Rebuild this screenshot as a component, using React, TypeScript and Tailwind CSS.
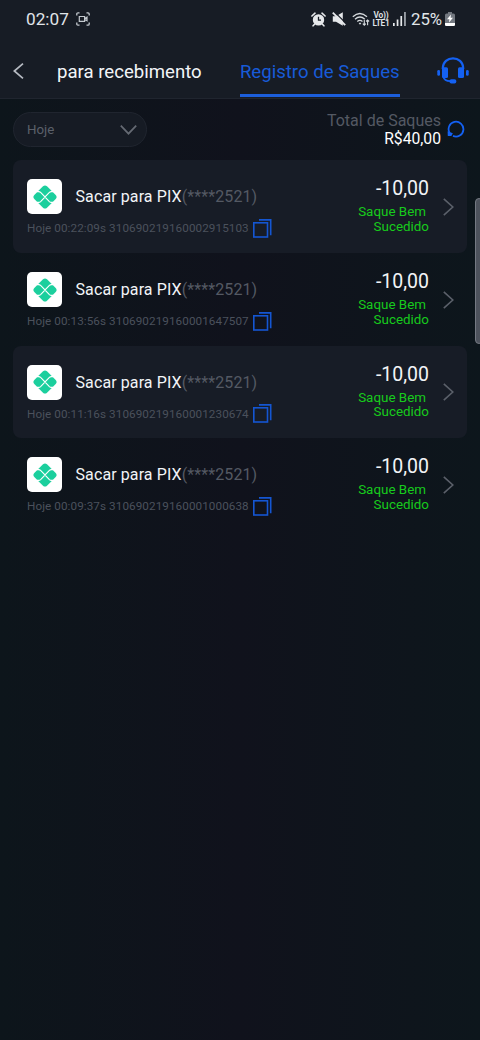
import clsx from "clsx";

type Withdrawal = {
  time: string;
  orderNo: string;
  account: string;
  amount: string;
};

const withdrawals: Withdrawal[] = [
  { time: "00:22:09s", orderNo: "310690219160002915103", account: "(****2521)", amount: "-10,00" },
  { time: "00:13:56s", orderNo: "310690219160001647507", account: "(****2521)", amount: "-10,00" },
  { time: "00:11:16s", orderNo: "310690219160001230674", account: "(****2521)", amount: "-10,00" },
  { time: "00:09:37s", orderNo: "310690219160001000638", account: "(****2521)", amount: "-10,00" },
];

function RecorderIcon() {
  return (
    <svg className="h-[14px] w-[14px]" viewBox="0 0 14 14" fill="none" stroke="#c3c8ce" strokeWidth="1.3">
      <path d="M.8 3.5V2Q.8.8 2 .8h1.5M10.5.8H12q1.2 0 1.2 1.2v1.5M13.2 10.5V12q0 1.2-1.2 1.2h-1.5M3.5 13.2H2Q.8 13.2.8 12v-1.5" />
      <path d="M3.3 4.5h5.300v4.800H3.300zM8.800 6.400l2.200-1.300v3.600l-2.200-1.300" strokeWidth="1.200" />
    </svg>
  );
}

function AlarmIcon() {
  return (
    <svg className="h-[15px] w-[15px]" viewBox="0 0 15 15">
      <path d="M.9 4 4 1.2M14.1 4 11 1.2M3.5 12.3l-1.4 1.5M11.5 12.3l1.4 1.5" stroke="#e6e8eb" strokeWidth="1.6" strokeLinecap="round" />
      <circle cx="7.5" cy="7.9" r="5.7" fill="#e6e8eb" />
      <path d="M7.5 4.7v3.5H10" fill="none" stroke="#171c25" strokeWidth="1.3" />
    </svg>
  );
}

function MuteIcon() {
  return (
    <svg className="h-[14px] w-[14px]" viewBox="0 0 14 14">
      <path d="M.8 4.200h3.200L10.800.2v13.600L4 9.800H.8z" fill="#e6e8eb" />
      <path d="M2-.6 14.400 11.800" stroke="#171c25" strokeWidth="1.2" />
      <path d="M.8.700 13.200 13.100" stroke="#e6e8eb" strokeWidth="1.900" />
    </svg>
  );
}

function WifiIcon() {
  return (
    <svg className="h-[14px] w-[18px]" viewBox="0 0 18 14" fill="none" stroke="#d5d9dd" strokeWidth="1.3">
      <path d="M.8 4.8q7-6.6 14.2 0" />
      <path d="M3 7.2q4.9-4.5 9.8 0" />
      <path d="M5.3 9.5q2.6-2.3 5.2 0" />
      <path d="M6.7 11.2 8 12.7l1.3-1.5-1.3-.8z" fill="#d5d9dd" stroke="none" />
      <path d="M12.3 8v5.2M10.8 11.7l1.5 1.5 1.5-1.5M15.6 13.2V8M14.1 9.5 15.6 8l1.5 1.5" strokeWidth="1.1" />
    </svg>
  );
}

function SignalIcon() {
  return (
    <svg className="h-[14px] w-[13px]" viewBox="0 0 13 14" fill="#e6e8eb">
      <rect x="0" y="11" width="1.7" height="3" />
      <rect x="3.7" y="7.5" width="1.7" height="6.5" />
      <rect x="7.4" y="4" width="1.7" height="10" />
      <rect x="11.1" y="0" width="1.7" height="14" fill="#a6abb2" />
    </svg>
  );
}

function BatteryIcon() {
  return (
    <svg className="h-[14px] w-[10px]" viewBox="0 0 10 14">
      <path d="M3 0h4v1.5h1.5Q10 1.5 10 3v9.5Q10 14 8.5 14h-7Q0 14 0 12.5V3q0-1.5 1.5-1.5H3z" fill="#737880" />
      <path d="M0 11h10v1.5Q10 14 8.5 14h-7Q0 14 0 12.5z" fill="#fff" />
      <path d="M6 2.500 2 7.300h2.400L4 10.500 8 5.800H5.600z" fill="#fff" />
    </svg>
  );
}

function HeadsetIcon() {
  return (
    <svg className="h-[27px] w-[32px]" viewBox="0 0 32 27" fill="#1461f3">
      <path d="M5.8 12C5.800-2.300 26.200-2.300 26.200 12" fill="none" stroke="#1461f3" strokeWidth="2.300" />
      <rect x="5" y="10.300" width="6" height="10.700" rx="1.500" />
      <rect x="21" y="10.300" width="6" height="10.700" rx="1.500" />
      <rect x=".3" y="13" width="2.700" height="5.800" rx="1.300" />
      <rect x="29" y="13" width="2.700" height="5.800" rx="1.300" />
      <path d="M6.200 19.500q1.200 4.700 7 4.700" fill="none" stroke="#1461f3" strokeWidth="1.700" />
      <rect x="12.500" y="22.300" width="6.800" height="4.200" rx="1.800" />
    </svg>
  );
}

function RefreshIcon() {
  return (
    <svg className="h-[18px] w-[18px]" viewBox="0 0 18 18">
      <path d="M2.700 13A7.400 7.400 0 1 1 6 15.900" fill="none" stroke="#1461f3" strokeWidth="1.800" />
      <path d="M.6 11.300 5.800 13.300 4.400 16H.8z" fill="#1461f3" />
    </svg>
  );
}

function PixIcon() {
  return (
    <div className="flex size-[35px] items-center justify-center rounded-[5px] bg-white">
      <svg className="size-6" viewBox="0 0 24 24">
        <path d="M10 1.3q2-1.800 4 0l8.700 8.700q1.800 2 0 4L14 22.700q-2 1.800-4 0L1.300 14q-1.800-2 0-4z" fill="#1bcf9d" />
        <path d="M4 6.600h1.600q1.200 0 2 .8L12 12l4.400-4.600q.8-.8 2-.8H20M4 17.400h1.600q1.200 0 2-.8L12 12l4.400 4.600q.8.800 2 .8H20" fill="none" stroke="#fff" strokeWidth="1.100" />
      </svg>
    </div>
  );
}

function CopyIcon() {
  return (
    <svg className="h-[19px] w-[19px] shrink-0" viewBox="0 0 19 19" fill="none" stroke="#1456d2" strokeWidth="1.600">
      <rect x=".8" y="3.800" width="13.700" height="14.200" />
      <path d="M6 .9h11.700v15.300" />
    </svg>
  );
}

function StatusBar() {
  return (
    <div className="flex h-[38px] items-center pr-[25px] pl-[26px] text-[#e1e5e9]">
      <span className="w-[50px] text-[17.200px] leading-5">02:07</span>
      <RecorderIcon />
      <div className="ml-auto flex items-center">
        <AlarmIcon />
        <span className="ml-[6px] flex"><MuteIcon /></span>
        <span className="ml-[6px] flex"><WifiIcon /></span>
        <span className="ml-[2px] flex w-[18px] flex-col items-center text-[8.300px] leading-[8px] font-semibold tracking-[-0.200px]">
          <span className="block h-[8px]">Vo))</span>
          <span className="block h-[8px]">LTE1</span>
        </span>
        <span className="ml-[3px] flex"><SignalIcon /></span>
        <span className="ml-[5px] w-[34px] text-[16.800px] leading-5 whitespace-nowrap">25%</span>
        <BatteryIcon />
      </div>
    </div>
  );
}

function Tabs() {
  return (
    <div className="flex h-[61px] items-start border-b border-[#20252f] text-[18.600px] leading-[22px] whitespace-nowrap">
      <button className="mt-[25px] ml-[13px] w-[44px]">
        <svg className="h-[16px] w-[11px]" viewBox="0 0 11 16" fill="none" stroke="#b6bac2" strokeWidth="1.700">
          <path d="M10 .7 1.300 8l8.700 7.300" />
        </svg>
      </button>
      <button className="mt-[23px] w-[182.500px] text-left text-[#f2f5f8]">para recebimento</button>
      <button className="flex h-[59px] w-[160.500px] justify-center border-b-3 border-[#1c5edb] pt-[23px] text-[#185bd8]">
        Registro de Saques
      </button>
      <button className="mt-[19px] ml-[37px]">
        <HeadsetIcon />
      </button>
    </div>
  );
}

function Summary() {
  return (
    <div className="flex h-[61px] items-start pt-[13px] pr-[15px] pl-[13px]">
      <button className="flex h-[35px] w-[134px] items-center justify-between rounded-full border border-[#20252f] bg-[#161b24] pr-[9px] pl-[13px] text-[13.300px] text-[#5b606a]">
        <span className="pt-px">Hoje</span>
        <svg className="h-[10px] w-[17px]" viewBox="0 0 17 10" fill="none" stroke="#656a73" strokeWidth="1.700">
          <path d="m.8.700 7.700 8 7.700-8" />
        </svg>
      </button>
      <div className="ml-auto flex items-start text-right whitespace-nowrap">
        <div>
          <p className="text-[16px] leading-[18px] text-[#545963]">Total de Saques</p>
          <p className="text-[15.700px] leading-[17px] text-white">R$40,00</p>
        </div>
        <button className="mt-[8px] ml-[6px] block h-[18px]">
          <RefreshIcon />
        </button>
      </div>
    </div>
  );
}

function WithdrawalRow({ item, highlighted }: { item: Withdrawal; highlighted: boolean }) {
  return (
    <li className={clsx("flex h-[92.700px] rounded-lg pr-[13px] pl-[14px] whitespace-nowrap", highlighted && "bg-[#171c26]")}>
      <div className="flex-1 pt-[19px]">
        <div className="flex items-center">
          <PixIcon />
          <p className="ml-[13.500px] pt-px text-[16px] leading-5 tracking-[0.100px] text-[#f2f4f7]">
            Sacar para PIX<span className="text-[#545963]">{item.account}</span>
          </p>
        </div>
        <div className="mt-[4px] flex items-center text-[11.700px] leading-[19px] tracking-[0.080px] text-[#4b515c]">
          <span className="w-[226px] pt-px">Hoje {item.time} {item.orderNo}</span>
          <CopyIcon />
        </div>
      </div>
      <div className="pt-[17px] text-right">
        <p className="text-[19.500px] leading-[23px] text-[#f2f4f7]">{item.amount}</p>
        <p className="mt-[5px] text-[13.400px] leading-[14.500px] text-[#17cb1c]">
          <span className="block pr-[3px]">Saque Bem</span>
          <span className="block">Sucedido</span>
        </p>
      </div>
      <svg className="mt-[37.500px] ml-[14px] h-[18px] w-[11px]" viewBox="0 0 11 18" fill="none" stroke="#5b606a" strokeWidth="1.600">
        <path d="m.8.800 9 8.200-9 8.200" />
      </svg>
    </li>
  );
}

export default function App() {
  return (
    <div className="relative h-[1040px] w-[480px] overflow-hidden bg-[#0e131c] bg-linear-to-r from-[#0d151b] via-[#10121c] to-[#0d161c] font-[Roboto,sans-serif]">
      <header className="bg-[#171c25]">
        <StatusBar />
        <Tabs />
      </header>
      <Summary />
      <ul className="mt-[0.400px] mr-[13px] ml-[13px]">
        {withdrawals.map((item, index) => (
          <WithdrawalRow key={item.orderNo} item={item} highlighted={index % 2 === 0} />
        ))}
      </ul>
      {/* scroll handle over the right edge */}
      <div className="absolute top-[198px] right-[-3px] h-[146px] w-[8px] rounded-full border border-[#747982] bg-[#4d525c]" />
    </div>
  );
}
